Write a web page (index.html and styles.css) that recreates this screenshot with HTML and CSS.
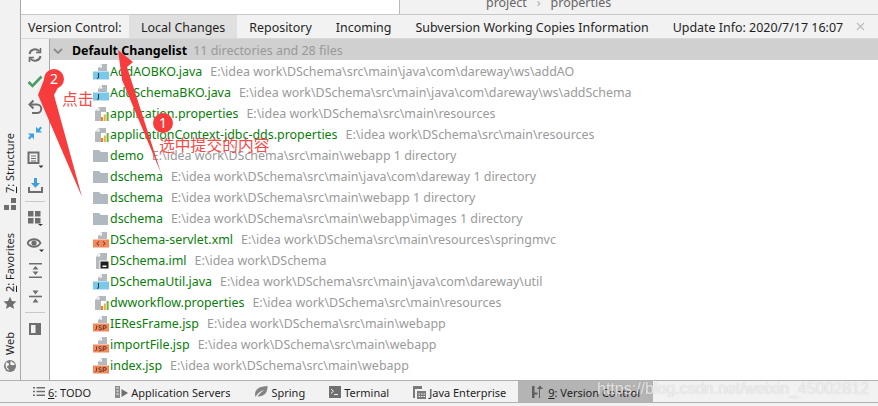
FILE: index.html
```html
<!DOCTYPE html>
<html lang="en">
<head>
<meta charset="utf-8">
<title>Version Control</title>
<link rel="stylesheet" href="styles.css">
</head>
<body>
<svg class="defs" width="0" height="0" aria-hidden="true">
  <symbol id="java" viewBox="0 0 16 16"><path d="M5 7V4l4-4h5v7z" fill="#b4b9bd"/><path d="M6 3.400 9 .6v2.800z" fill="#fff"/><rect y="7.500" width="16" height="8" fill="#7bc9ea"/><path d="M5.500 9v4.200c0 .9-.5 1.200-1.600 1" fill="none" stroke="#26404f" stroke-width="1.100"/></symbol>
  <symbol id="props" viewBox="0 0 16 16"><path d="M2 15V5l4-4h7v5H8v9z" fill="#b4b9bd"/><path d="M3 4.600 6.400 1.400v3.200z" fill="#fff"/><rect x="8" y="11" width="2" height="4" fill="#ef7b37"/><rect x="10.800" y="8.500" width="2" height="6.500" fill="#e8b23b"/><rect x="13.600" y="6" width="2" height="9" fill="#62b543"/></symbol>
  <symbol id="folder" viewBox="0 0 16 12"><path d="M0 0h6l2 2h7v10H0z" fill="#b0b9c0"/></symbol>
  <symbol id="xml" viewBox="0 0 16 16"><path d="M5 7V4l4-4h5v7z" fill="#b4b9bd"/><path d="M6 3.400 9 .6v2.800z" fill="#fff"/><rect y="7.500" width="16" height="8" fill="#f2885c"/><path d="M6 9.500 3.800 11.500 6 13.500M10 9.500l2.200 2L10 13.500" fill="none" stroke="#5b3320"/></symbol>
  <symbol id="iml" viewBox="0 0 16 16"><path d="M3 16V4l4-4h7v16z" fill="#b4b9bd"/><path d="M4 3.400 7.200.6v2.800z" fill="#fff"/><rect x="7" y="8" width="9" height="8" fill="#1f1f1f" stroke="#fff"/><rect x="9.500" y="12.500" width="4" height="1.500" fill="#fff"/></symbol>
  <symbol id="jsp" viewBox="0 0 16 16"><path d="M5 7V4l4-4h5v7z" fill="#b4b9bd"/><path d="M6 3.400 9 .6v2.800z" fill="#fff"/><rect y="7.500" width="16" height="8" fill="#f2885c"/><path d="M3.600 9.500v3.200c0 .8-.6 1-1.500.8M8.400 10c-.4-.5-2.600-.7-2.600.6 0 1.500 2.800.9 2.800 2.300 0 1.200-2.400 1-3 .4M10.200 14V9.600h1.800c1.800 0 1.800 2.600 0 2.600h-1.800" fill="none" stroke="#5b3320" stroke-width=".9"/></symbol>
</svg>
<div class="main">
  <aside class="side">
    <div class="side-item">
      <span class="vtext"><u>7</u>: Structure</span>
      <svg width="14" height="14" viewBox="0 0 14 14"><path d="M8 1h5v5H8zM1 8h5v5H1zM8 8h5v5H8z" fill="#6e6e6e"/></svg>
    </div>
    <div class="side-item side-next">
      <span class="vtext"><u>2</u>: Favorites</span>
      <svg width="14" height="14" viewBox="0 0 14 14"><path d="m7 .8 1.900 4.200 4.600.5-3.400 3.100.9 4.500L7 10.400l-4 2.700.9-4.500L.5 5.500l4.600-.5z" fill="#6e6e6e"/></svg>
    </div>
    <div class="side-item side-next">
      <span class="vtext">Web</span>
      <svg width="14" height="14" viewBox="0 0 14 14"><circle cx="7" cy="7" r="6" fill="#7b7b7b"/><path d="M3 3.500c2 0 3 .5 3 2s-2 1-2 2.500 2 1 2 3.500C3 11 2 6 3 3.500zM8 2c1 1 3 1.500 4 3.500-1.500 1-3 .5-4 .5S7 3.500 8 2z" fill="#f2f2f2"/></svg>
    </div>
  </aside>
  <div class="content">
    <div class="topstrip">
      <div class="top-left"></div>
      <div class="crumbs"><span>project</span><span class="crumb-sep">›</span><span>properties</span></div>
    </div>
    <nav class="tabs">
      <span class="tabs-label">Version Control:</span>
      <span class="tab active">Local Changes</span>
      <span class="tab">Repository</span>
      <span class="tab">Incoming</span>
      <span class="tab">Subversion Working Copies Information</span>
      <span class="tab">Update Info: 2020/7/17 16:07</span>
      <svg class="tab-close" width="9" height="9" viewBox="0 0 9 9"><path d="m1 1 7 7M8 1 1 8" stroke="#bdbdbd" stroke-width="1.200"/></svg>
    </nav>
    <div class="body">
      <div class="toolbar">
        <span class="tool"><svg width="16" height="16" viewBox="0 0 16 16" fill="none" stroke="#6e6e6e" stroke-width="2"><path d="M2.500 7a5.600 5.600 0 0 1 10-2.500M13.500 9a5.600 5.600 0 0 1-10 2.500"/><path d="M13.500 1v4.500H9M2.500 15v-4.500H7" stroke-width="1.600"/></svg></span>
        <span class="tool"><svg width="16" height="14" viewBox="0 0 16 14" fill="none" stroke="#4d9c66" stroke-width="2.600"><path d="m1.500 8 4 4 9-9.500"/></svg></span>
        <span class="tool"><svg width="16" height="16" viewBox="0 0 16 16" fill="none" stroke="#6e6e6e" stroke-width="2"><path d="M2.500 5.500H10a4 4 0 0 1 0 8.500H5"/><path d="M6.500 1.500 2.500 5.500l4 4"/></svg></span>
        <span class="tool"><svg width="16" height="14" viewBox="0 0 16 14"><path d="M9 .5v6h6l-2.200-2.200L15 2 13.500.5 11 3z" fill="#3f9fdc"/><path d="M7 13.500v-6H1l2.200 2.200L1 12l1.500 1.500L5 11z" fill="#3f9fdc"/></svg></span>
        <span class="tool"><svg width="17" height="17" viewBox="0 0 17 17" fill="none" stroke="#6e6e6e"><path d="M1.500 1.500h10v10.500H1.500z" stroke-width="2"/><path d="M4 5h5M4 7.500h5M4 10h5"/><path d="M11.500 14.500h5l-2.500 2.500z" fill="#333" stroke="none"/></svg></span>
        <span class="tool"><svg width="15" height="15" viewBox="0 0 15 15"><path d="M6 0h3v5h3L7.500 9.800 3 5h3z" fill="#3f9fdc"/><path d="M1 9v5h13V9" fill="none" stroke="#6e6e6e" stroke-width="2"/></svg></span>
        <span class="tool-sep"></span>
        <span class="tool"><svg width="16" height="16" viewBox="0 0 16 16"><path d="M1 1h5.500v5.500H1zM8 1h5.500v5.500H8zM1 8h5.500v5.500H1zM8 8h5.500v5.500H8z" fill="#6e6e6e"/><path d="M11 14h5l-2.500 2z" fill="#333"/></svg></span>
        <span class="tool"><svg width="17" height="16" viewBox="0 0 17 16"><path d="M.5 7C3.500 2 10.500 2 13.500 7c-3 5-10 5-13 0z" fill="none" stroke="#6e6e6e" stroke-width="1.800"/><circle cx="7" cy="7" r="2.600" fill="#6e6e6e"/><path d="M12 13.500h5L14.500 16z" fill="#333"/></svg></span>
        <span class="tool"><svg width="13" height="15" viewBox="0 0 13 15"><path d="M0 0h13v1.600H0zM0 13.400h13V15H0z" fill="#6e6e6e"/><path d="M6.500 3 9.500 6.400h-6zM6.500 12 3.500 8.600h6z" fill="#6e6e6e"/></svg></span>
        <span class="tool"><svg width="13" height="15" viewBox="0 0 13 15"><path d="M0 6.700h13v1.600H0z" fill="#6e6e6e"/><path d="M6.500 5.500 3.500 1.500h6zM6.500 9.500 9.500 13.500h-6z" fill="#6e6e6e"/></svg></span>
        <span class="tool-sep"></span>
        <span class="tool"><svg width="12" height="12" viewBox="0 0 12 12"><path d="M0 0h12v12H0z" fill="#6e6e6e"/><path d="M2 2h4.500v8H2z" fill="#f2f2f2"/></svg></span>
      </div>
      <div class="list">
        <div class="group"><svg class="chev" width="10" height="6" viewBox="0 0 10 6"><path d="m1 1 4 4 4-4" fill="none" stroke="#8c8c8c" stroke-width="1.800"/></svg><b class="group-name">Default Changelist</b><span class="group-info">11 directories and 28 files</span></div>
        <div class="row"><svg class="ic"><use href="#java"/></svg><span class="name">AddAOBKO.java</span><span class="path">E:\idea work\DSchema\src\main\java\com\dareway\ws\addAO</span></div>
        <div class="row"><svg class="ic"><use href="#java"/></svg><span class="name">AddSchemaBKO.java</span><span class="path">E:\idea work\DSchema\src\main\java\com\dareway\ws\addSchema</span></div>
        <div class="row"><svg class="ic"><use href="#props"/></svg><span class="name">application.properties</span><span class="path">E:\idea work\DSchema\src\main\resources</span></div>
        <div class="row"><svg class="ic"><use href="#props"/></svg><span class="name">applicationContext-jdbc-dds.properties</span><span class="path">E:\idea work\DSchema\src\main\resources</span></div>
        <div class="row"><svg class="ic ic-folder"><use href="#folder"/></svg><span class="name">demo</span><span class="path">E:\idea work\DSchema\src\main\webapp 1 directory</span></div>
        <div class="row"><svg class="ic ic-folder"><use href="#folder"/></svg><span class="name">dschema</span><span class="path">E:\idea work\DSchema\src\main\java\com\dareway 1 directory</span></div>
        <div class="row"><svg class="ic ic-folder"><use href="#folder"/></svg><span class="name">dschema</span><span class="path">E:\idea work\DSchema\src\main\webapp 1 directory</span></div>
        <div class="row"><svg class="ic ic-folder"><use href="#folder"/></svg><span class="name">dschema</span><span class="path">E:\idea work\DSchema\src\main\webapp\images 1 directory</span></div>
        <div class="row"><svg class="ic"><use href="#xml"/></svg><span class="name">DSchema-servlet.xml</span><span class="path">E:\idea work\DSchema\src\main\resources\springmvc</span></div>
        <div class="row"><svg class="ic"><use href="#iml"/></svg><span class="name">DSchema.iml</span><span class="path">E:\idea work\DSchema</span></div>
        <div class="row"><svg class="ic"><use href="#java"/></svg><span class="name">DSchemaUtil.java</span><span class="path">E:\idea work\DSchema\src\main\java\com\dareway\util</span></div>
        <div class="row"><svg class="ic"><use href="#props"/></svg><span class="name">dwworkflow.properties</span><span class="path">E:\idea work\DSchema\src\main\resources</span></div>
        <div class="row"><svg class="ic"><use href="#jsp"/></svg><span class="name">IEResFrame.jsp</span><span class="path">E:\idea work\DSchema\src\main\webapp</span></div>
        <div class="row"><svg class="ic"><use href="#jsp"/></svg><span class="name">importFile.jsp</span><span class="path">E:\idea work\DSchema\src\main\webapp</span></div>
        <div class="row"><svg class="ic"><use href="#jsp"/></svg><span class="name">index.jsp</span><span class="path">E:\idea work\DSchema\src\main\webapp</span></div>
      </div>
    </div>
  </div>
</div>
<footer class="bottom">
  <span class="btab"><svg width="12" height="11" viewBox="0 0 12 11"><path d="M0 1h2v1.500H0zM3.500 1H12v1.500H3.500zM0 4.700h2v1.500H0zM3.500 4.700H12v1.500H3.500zM0 8.500h2V10H0zM3.500 8.500H12V10H3.500z" fill="#6e6e6e"/></svg><span class="btext"><u>6</u>: TODO</span></span>
  <span class="btab"><svg width="13" height="14" viewBox="0 0 13 14"><path d="M0 1h5v12H0z" fill="#8a8a8a"/><path d="M1.200 3h2.600M1.200 6h2.600M1.200 9h2.600" stroke="#f2f2f2"/><path d="m6.500 4 6.500 4-6.500 4z" fill="#6e6e6e"/></svg><span class="btext">Application Servers</span></span>
  <span class="btab"><svg width="14" height="13" viewBox="0 0 14 13"><path d="M1.500 12C-.5 6 4 1 13.500 1c.5 7-4 11-10 10.500C6 8 8 6.500 10 5 6.500 6 3.500 8.500 1.500 12z" fill="#858585"/></svg><span class="btext">Spring</span></span>
  <span class="btab"><svg width="12" height="12" viewBox="0 0 12 12"><path d="M0 0h12v12H0z" fill="#707070"/><path d="m2 3 2.500 2.200L2 7.400M5 8.500h4" fill="none" stroke="#f2f2f2"/></svg><span class="btext">Terminal</span></span>
  <span class="btab"><svg width="13" height="14" viewBox="0 0 13 14"><path d="M0 1h9v3H2v9H0z" fill="#7a7a7a"/><path d="M4 6h9v8H4z" fill="#7a7a7a"/><path d="M5.500 8.500h1.500v1H5.500zM8 8.500h1.500v1H8zM10.500 8.500H12v1h-1.500zM5.500 11h1.500v1H5.500zM8 11h1.500v1H8zM10.500 11H12v1h-1.500z" fill="#f2f2f2"/></svg><span class="btext">Java Enterprise</span></span>
  <span class="btab btab-active"><svg width="11" height="14" viewBox="0 0 11 14"><path d="M0 1h2.500v12H0zM2.500 9.500h3V7.500h-3zM8 13V4h3L8 .5 5 4h2v9z" fill="#5f5f5f"/></svg><span class="btext"><u>9</u>: Version Control</span></span>
</footer>
<svg class="marks" width="878" height="406" viewBox="0 0 878 406" aria-hidden="true">
  <path class="mark" d="M118 50 133 62 127 67 161 173 122 80z"/>
  <circle class="mark" cx="163" cy="123" r="10"/>
  <path class="mark" d="M38 95 47 72 60 84 54 95 82 197z"/>
  <circle class="mark" cx="54" cy="79" r="10"/>
</svg>
<span class="note-num num-one">1</span>
<span class="note-num num-two">2</span>
<span class="note note-click">点击</span>
<span class="note note-select">选中提交的内容</span>
<span class="watermark">https://blog.csdn.net/weixin_45002812</span>
</body>
</html>
```

FILE: styles.css
```css
* { box-sizing: border-box; }
html, body { margin: 0; padding: 0; }
body {
  position: relative;
  width: 878px;
  height: 406px;
  overflow: hidden;
  background: #f2f2f2;
  font: 12.45px/18px "Noto Sans", "Noto Sans CJK SC", sans-serif;
  color: #1f1f1f;
}
.defs { position: absolute; }
.main { display: flex; height: 380px; }
.side {
  width: 21px;
  flex: none;
  border-right: 1px solid #a8a8a8;
  display: flex;
  flex-direction: column;
  align-items: center;
  padding-top: 133px;
  overflow: hidden;
}
.side-item { display: flex; flex-direction: column; align-items: center; gap: 4px; }
.side-next { margin-top: 22px; }
.vtext { writing-mode: vertical-rl; transform: rotate(180deg); font-size: 11px; line-height: 16px; white-space: nowrap; }
.content { flex: 1; min-width: 0; display: flex; flex-direction: column; }
.topstrip { height: 15px; flex: none; display: flex; border-bottom: 1px solid #c9c9c9; overflow: hidden; }
.top-left { width: 379px; background: #fff; border-right: 1px solid #b8b8b8; }
.crumbs { flex: 1; display: flex; gap: 10px; padding-left: 86px; margin-top: -6px; color: #666; }
.crumb-sep { color: #aaa; }
.tabs { height: 24px; flex: none; display: flex; align-items: center; border-bottom: 1px solid #d8d8d8; }
.tabs-label { width: 108px; padding: 2px 0 0 7px; flex: none; white-space: nowrap; }
.tab { height: 100%; display: flex; align-items: center; padding: 2px 12px 0; white-space: nowrap; }
.tab.active { background: #e0e0e0; }
.tab-close { margin-left: 1px; }
.body { flex: 1; display: flex; min-height: 0; }
.toolbar {
  width: 29px;
  flex: none;
  border-right: 1px solid #a8a8a8;
  padding-top: 3px;
  display: flex;
  flex-direction: column;
  align-items: center;
}
.tool { height: 26px; flex: none; display: flex; align-items: center; justify-content: center; }
.tool-sep { width: 20px; height: 1px; flex: none; margin: 3px 0; background: #c9c9c9; }
.list { flex: 1; min-width: 0; background: #fff; overflow: hidden; }
.group { height: 21px; display: flex; align-items: center; background: #d0d0d0; padding: 2px 0 0 3px; }
.chev { flex: none; }
.group-name { margin-left: 9px; color: #000; font-weight: 700; }
.group-info { margin-left: 6px; color: #999; }
.row { height: 21px; display: flex; align-items: center; padding: 3px 0 0 43px; white-space: nowrap; }
.ic { width: 16px; height: 16px; flex: none; margin-bottom: 1px; }
.ic-folder { height: 12px; }
.name { margin-left: 1px; color: #0a7d0a; }
.path { margin-left: 8px; color: #9a9a9a; }
.bottom {
  height: 23px;
  border-top: 1px solid #b0b0b0;
  border-bottom: 1px solid #b0b0b0;
  display: flex;
  align-items: stretch;
  padding-left: 21px;
  font-size: 11px;
}
.btab { display: flex; align-items: center; gap: 3px; padding: 0 12px; white-space: nowrap; }
.btext { padding-top: 2px; }
.btab-active { background: #b4b4b4; padding: 0 13px 0 14px; gap: 5px; }
.marks { position: absolute; left: 0; top: 0; pointer-events: none; }
.mark { fill: #f63c3c; }
.note-num { position: absolute; width: 20px; text-align: center; color: #fff; font-size: 14px; line-height: 20px; }
.num-one { left: 153px; top: 113px; }
.num-two { left: 44px; top: 69px; }
.note { position: absolute; color: #f64a4a; font-size: 15.8px; line-height: 20px; font-family: "Noto Sans CJK SC", sans-serif; white-space: nowrap; }
.note-click { left: 62px; top: 89px; }
.note-select { left: 159px; top: 135px; }
.watermark {
  position: absolute;
  left: 597px;
  top: 378px;
  font: 16px/22px "Liberation Sans", sans-serif;
  color: rgba(255, 255, 255, .72);
  text-shadow: 0 0 1px rgba(120, 120, 120, .45);
  white-space: nowrap;
}
```
